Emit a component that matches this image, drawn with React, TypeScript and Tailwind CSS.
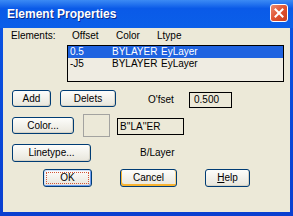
import type { ReactNode } from 'react';

const font = { fontFamily: '"Liberation Sans", Arial, sans-serif' };

function XpButton({
  children,
  className = '',
  variant = 'normal',
}: {
  children: ReactNode;
  className?: string;
  variant?: 'normal' | 'default' | 'hot';
}) {
  const ring =
    variant === 'default'
      ? 'shadow-[inset_-1px_-1px_0_#6f9cf0,inset_1px_1px_0_#cfe0fb]'
      : variant === 'hot'
        ? 'shadow-[inset_1px_-2px_0_#f8b330,inset_-1px_0_0_#fcd283]'
        : 'shadow-[inset_-1px_-1px_0_#d6d3c6]';
  return (
    <div
      className={`relative flex shrink-0 items-center justify-center rounded-[3px] border border-[#003c74] bg-linear-to-b from-[#fdfdfb] to-[#e8e6dc] text-[10px] leading-none text-black ${ring} ${className}`}
    >
      {variant === 'default' && (
        <div className="absolute inset-[2px] border border-dotted border-[#d2563a]" />
      )}
      <span className="relative">{children}</span>
    </div>
  );
}

export default function App() {
  return (
    <div style={font} className="flex h-[216px] w-[293px] flex-col bg-linear-to-b from-[#0a55e4] to-[#0a3fd0]">
      {/* title bar */}
      <div className="flex h-[28px] shrink-0 items-start justify-between bg-linear-to-b from-[#3b8af4] via-[#0a5ae8] via-30% to-[#0b5fe9] pl-[7px] pr-[5px] pt-[4px]">
        <span className="mt-[3px] text-[12px] font-bold leading-[14px] text-white [text-shadow:1px_1px_0_#0a2a8a]">
          Element Properties
        </span>
        <div className="flex h-[18px] w-[18px] items-center justify-center rounded-[3px] border border-white bg-linear-to-br from-[#e98a70] via-[#e0512f] to-[#c8401f]">
          <svg width="10" height="10" viewBox="0 0 10 10">
            <path d="M1.5 1.5 L8.5 8.5 M8.5 1.5 L1.5 8.5" stroke="white" strokeWidth="2" strokeLinecap="square" />
          </svg>
        </div>
      </div>

      {/* client area */}
      <div className="mx-[3px] mb-[4px] flex flex-1 flex-col bg-[#ece9d8] pt-[2px] text-[10px] text-black">
        <div className="flex h-[12px] items-center leading-[12px]">
          <span className="ml-[8px] w-[61px]">Elements:</span>
          <span className="w-[44px]">Offset</span>
          <span className="w-[41px]">Color</span>
          <span>Ltype</span>
        </div>

        <div className="ml-[64px] mt-[3px] h-[37px] w-[217px] border border-black bg-[#efece2]">
          <div className="flex h-[12px] items-center bg-[#1f63e0] pl-[2px] leading-[12px] text-white">
            <span className="w-[42px]">0.5</span>
            <span className="w-[49px]">BYLAYER</span>
            <span>EyLayer</span>
          </div>
          <div className="flex h-[12px] items-center pl-[2px] leading-[12px]">
            <span className="w-[42px]">-J5</span>
            <span className="w-[49px]">BYLAYER</span>
            <span>EyLayer</span>
          </div>
        </div>

        <div className="mt-[8px] flex items-start">
          <XpButton className="ml-[9px] h-[17px] w-[39px]">Add</XpButton>
          <XpButton className="ml-[9px] h-[17px] w-[56px]">Delets</XpButton>
          <span className="ml-[32px] mt-[4px] w-[41px] leading-[12px]">O'fset</span>
          <div className="mt-[2px] flex h-[16px] w-[43px] items-center border border-black pl-[4px] leading-none">
            0.500
          </div>
        </div>

        <div className="mt-[6px] flex items-start">
          <XpButton className="ml-[9px] mt-[3px] h-[17px] w-[62px]">Color...</XpButton>
          <div className="ml-[9px] h-[23px] w-[27px] border border-[#a3a3a0]" />
          <div className="ml-[7px] mt-[4px] flex h-[17px] w-[67px] items-center border border-black pl-[2px] leading-none">
            B''LA''ER
          </div>
        </div>

        <div className="mt-[7px] flex items-center">
          <XpButton className="ml-[9px] h-[18px] w-[79px]">Linetype...</XpButton>
          <span className="ml-[49px] leading-[12px]">B/Layer</span>
        </div>

        <div className="mt-[7px] flex items-start">
          <XpButton variant="default" className="ml-[40px] h-[18px] w-[49px]">
            OK
          </XpButton>
          <XpButton variant="hot" className="ml-[28px] h-[18px] w-[57px]">
            Cancel
          </XpButton>
          <XpButton className="ml-[28px] h-[18px] w-[45px]">
            <span className="underline">H</span>elp
          </XpButton>
        </div>
      </div>
    </div>
  );
}
